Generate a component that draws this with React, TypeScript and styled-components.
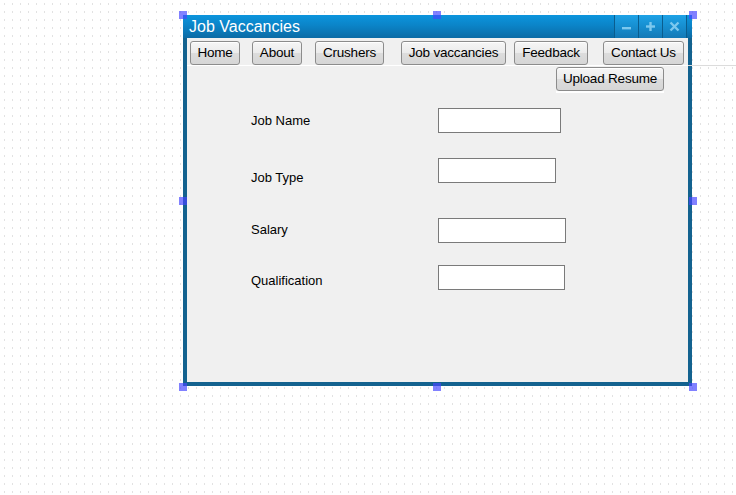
import React from "react";
import styled, { createGlobalStyle } from "styled-components";

const Global = createGlobalStyle`
  html, body {
    margin: 0;
    padding: 0;
  }
  body {
    min-height: 100vh;
    background-color: #ffffff;
    background-image:
      linear-gradient(to bottom, #ffffff 3px, transparent 3px, transparent 5px, #ffffff 5px),
      linear-gradient(to right, transparent 4px, #e2e2e2 4px, #e2e2e2 5px, transparent 5px);
    background-size: 8px 8px, 8px 8px;
    font-family: "Liberation Sans", Arial, sans-serif;
    overflow: hidden;
  }
`;

const Canvas = styled.div`
  width: 736px;
  height: 495px;
  padding: 15px 0 0 183px;
  box-sizing: border-box;
`;

const Selection = styled.div`
  position: relative;
  width: 509px;
`;

const Handle = styled.div<{ $x: number; $y: number }>`
  position: absolute;
  left: ${(p) => p.$x - 4}px;
  top: ${(p) => p.$y - 4}px;
  width: 8px;
  height: 8px;
  background: rgba(70, 70, 255, 0.68);
  z-index: 5;
`;

const TitleBar = styled.div`
  height: 23px;
  display: flex;
  align-items: center;
  padding: 0 5px 0 6px;
  background: linear-gradient(to bottom, #0c95dd 0%, #0b84c8 45%, #0b6ba5 100%);
  box-sizing: border-box;
`;

const Title = styled.div`
  flex: 1;
  color: #ffffff;
  font-size: 16px;
  line-height: 18px;
  padding-top: 1px;
  white-space: nowrap;
`;

const TitleButtons = styled.div`
  display: flex;
  align-self: stretch;
  border-right: 1px solid #0a5d8e;
`;

const TitleButton = styled.div`
  width: 23px;
  border-left: 1px solid #0a5d8e;
  background: linear-gradient(to bottom, #1ea2e6 0%, #1790d2 45%, #1479b6 100%);
  display: flex;
  align-items: center;
  justify-content: center;
`;

const Body = styled.div`
  height: 348px;
  box-sizing: border-box;
  background: #f0f0f0;
  border: 4px solid #13628f;
  border-top: 0;
  position: relative;
`;

const NavBar = styled.div`
  display: flex;
  align-items: flex-start;
  width: 549px;
  padding: 3px 0 0 3px;
  height: 28px;
  box-sizing: border-box;
  background: linear-gradient(to right, #ffffff 501px, #dcdcdc 501px) left bottom / 100% 1px no-repeat;
  position: relative;
  z-index: 2;
`;

const Button = styled.div<{ $w: number; $gap?: number }>`
  width: ${(p) => p.$w}px;
  margin-left: ${(p) => p.$gap ?? 0}px;
  height: 24px;
  box-sizing: border-box;
  border: 1px solid #8c8c8c;
  border-radius: 3px;
  background: linear-gradient(to bottom, #f6f6f6 0%, #ebebeb 50%, #dcdcdc 51%, #d6d6d6 100%);
  box-shadow: inset 0 1px 0 #ffffff;
  color: #000000;
  font-size: 13.5px;
  line-height: 22px;
  letter-spacing: -0.2px;
  text-align: center;
  white-space: nowrap;
  flex-shrink: 0;
`;

const SubBar = styled.div`
  margin: 1px 0 0 369px;
  width: 108px;
  border-bottom: 2px solid #ffffff;
`;

const Form = styled.div`
  padding-left: 64px;
  display: flex;
  flex-direction: column;
`;

const Row = styled.div<{ $top: number }>`
  display: flex;
  align-items: flex-start;
  margin-top: ${(p) => p.$top}px;
`;

const Label = styled.div<{ $offset: number }>`
  width: 187px;
  margin-top: ${(p) => p.$offset}px;
  font-size: 13px;
  line-height: 15px;
  color: #000000;
`;

const Field = styled.div<{ $w: number }>`
  width: ${(p) => p.$w}px;
  height: 25px;
  box-sizing: border-box;
  border: 1px solid #7a7a7a;
  background: #ffffff;
`;

const iconColor = "#7cc8ee";

const MinIcon = () => (
  <svg width="11" height="11" viewBox="0 0 11 11">
    <rect x="1" y="6" width="9" height="2.4" fill={iconColor} />
  </svg>
);
const PlusIcon = () => (
  <svg width="11" height="11" viewBox="0 0 11 11">
    <rect x="1" y="4.3" width="9" height="2.4" fill={iconColor} />
    <rect x="4.3" y="1" width="2.4" height="9" fill={iconColor} />
  </svg>
);
const CloseIcon = () => (
  <svg width="11" height="11" viewBox="0 0 11 11">
    <path d="M1.5 1.5 L9.5 9.5 M9.5 1.5 L1.5 9.5" stroke={iconColor} strokeWidth="2.4" />
  </svg>
);

const navItems = [
  { label: "Home", w: 50, gap: 0 },
  { label: "About", w: 50, gap: 12 },
  { label: "Crushers", w: 69, gap: 13 },
  { label: "Job vaccancies", w: 105, gap: 17 },
  { label: "Feedback", w: 74, gap: 8 },
  { label: "Contact Us", w: 81, gap: 15 },
];

const fields = [
  { label: "Job Name", top: 15, offset: 5, w: 123 },
  { label: "Job Type", top: 25, offset: 12, w: 118 },
  { label: "Salary", top: 33, offset: 4, w: 128 },
  { label: "Qualification", top: 22, offset: 8, w: 127 },
];

const handles: [number, number][] = [
  [0, 0],
  [254, 0],
  [510, 0],
  [0, 186],
  [510, 186],
  [0, 372],
  [254, 372],
  [510, 372],
];

export default function App() {
  return (
    <>
      <Global />
      <Canvas>
        <Selection>
          <TitleBar>
            <Title>Job Vaccancies</Title>
            <TitleButtons>
              <TitleButton>
                <MinIcon />
              </TitleButton>
              <TitleButton>
                <PlusIcon />
              </TitleButton>
              <TitleButton>
                <CloseIcon />
              </TitleButton>
            </TitleButtons>
          </TitleBar>
          <Body>
            <NavBar>
              {navItems.map((n) => (
                <Button key={n.label} $w={n.w} $gap={n.gap}>
                  {n.label}
                </Button>
              ))}
            </NavBar>
            <SubBar>
              <Button $w={108}>Upload Resume</Button>
            </SubBar>
            <Form>
              {fields.map((f) => (
                <Row key={f.label} $top={f.top}>
                  <Label $offset={f.offset}>{f.label}</Label>
                  <Field $w={f.w} />
                </Row>
              ))}
            </Form>
          </Body>
          {handles.map(([x, y], i) => (
            <Handle key={i} $x={x} $y={y} />
          ))}
        </Selection>
      </Canvas>
    </>
  );
}
